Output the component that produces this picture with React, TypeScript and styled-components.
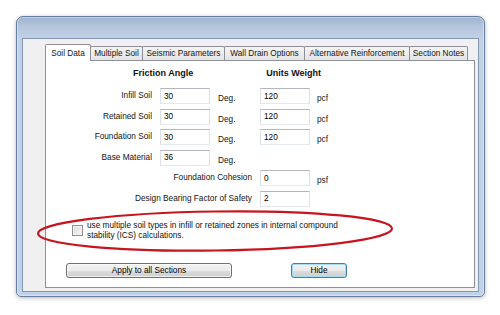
import { Fragment } from "react";
import { createGlobalStyle, styled } from "styled-components";

const GlobalStyle = createGlobalStyle`
  html, body {
    margin: 0;
    background: #fff;
  }
  body {
    font-family: "Liberation Sans", Arial, sans-serif;
    font-size: 8.25px;
    color: #141414;
  }
`;

const tabs = [
  { label: "Soil Data", w: 46 },
  { label: "Multiple Soil", w: 53 },
  { label: "Seismic Parameters", w: 83 },
  { label: "Wall Drain Options", w: 81 },
  { label: "Alternative Reinforcement", w: 106 },
  { label: "Section Notes", w: 59 },
];

const soilRows = [
  { label: "Infill Soil", angle: "30", weight: "120" },
  { label: "Retained Soil", angle: "30", weight: "120" },
  { label: "Foundation Soil", angle: "30", weight: "120" },
  { label: "Base Material", angle: "36" },
];

export default function App() {
  return (
    <Stage>
      <GlobalStyle />
      <Window>
        <TitleBar />
        <Client>
          <TabStrip>
            {tabs.map((t, i) => (
              <Tab key={t.label} $w={t.w} $active={i === 0}>
                {t.label}
              </Tab>
            ))}
          </TabStrip>
          <Panel>
            <HeadRow>
              <Heading>Friction Angle</Heading>
              <Heading>Units Weight</Heading>
            </HeadRow>
            <FormGrid>
              {soilRows.map((r) => (
                <Fragment key={r.label}>
                  <Label>{r.label}</Label>
                  <Field readOnly defaultValue={r.angle} />
                  <Unit>Deg.</Unit>
                  {r.weight ? (
                    <>
                      <Field readOnly defaultValue={r.weight} />
                      <Unit $right>pcf</Unit>
                    </>
                  ) : (
                    <>
                      <span />
                      <span />
                    </>
                  )}
                </Fragment>
              ))}
              <Label $wide>Foundation Cohesion</Label>
              <Field readOnly defaultValue="0" />
              <Unit $right>psf</Unit>
              <Label $wide>Design Bearing Factor of Safety</Label>
              <Field readOnly defaultValue="2" />
              <span />
            </FormGrid>
            <CheckRow>
              <CheckBox />
              <CheckText>
                use multiple soil types in infill or retained zones in internal compound
                <br />
                stability (ICS) calculations.
              </CheckText>
            </CheckRow>
            <ButtonRow>
              <Button $w={166}>Apply to all Sections</Button>
              <Button $w={56} $default>
                Hide
              </Button>
            </ButtonRow>
          </Panel>
          <Marker viewBox="0 0 452 250" width="452" height="250">
            <ellipse
              cx="192"
              cy="192"
              rx="177"
              ry="19.5"
              transform="rotate(-0.8 192 192)"
              fill="none"
              stroke="#c8141e"
              strokeWidth="2.2"
            />
          </Marker>
        </Client>
      </Window>
    </Stage>
  );
}

const Stage = styled.div`
  width: 500px;
  height: 315px;
  box-sizing: border-box;
  padding: 16px 0 0 16px;
  overflow: hidden;
`;

const Window = styled.div`
  width: 469px;
  height: 281px;
  box-sizing: border-box;
  display: flex;
  flex-direction: column;
  padding: 0 5px 4px 5px;
  border: 1px solid #657d9e;
  border-radius: 7px 7px 5px 5px;
  background: linear-gradient(
    180deg,
    #9fb3cf 0px,
    #b3c4db 9px,
    #c2d1e6 22px,
    #c1d2e8 100%
  );
  box-shadow: 0 1px 4px rgba(0, 0, 0, 0.28),
    inset 0 0 0 1px rgba(255, 255, 255, 0.4);
`;

const TitleBar = styled.div`
  flex: none;
  height: 21px;
`;

const Client = styled.div`
  flex: 1;
  position: relative;
  display: flex;
  flex-direction: column;
  box-sizing: border-box;
  padding: 5px 3px 3px 22px;
  background: #f0f0f0;
  border: 1px solid #8397b3;
`;

const TabStrip = styled.div`
  display: flex;
  align-items: flex-end;
  height: 17px;
  margin-bottom: -1px;
  position: relative;
  z-index: 1;
`;

const Tab = styled.div<{ $w: number; $active?: boolean }>`
  flex: none;
  width: ${(p) => p.$w}px;
  height: ${(p) => (p.$active ? 17 : 14)}px;
  margin-bottom: ${(p) => (p.$active ? 0 : 1)}px;
  box-sizing: border-box;
  display: flex;
  align-items: center;
  justify-content: center;
  white-space: nowrap;
  border: 1px solid #8e9099;
  border-bottom: none;
  border-radius: 2px 2px 0 0;
  background: ${(p) =>
    p.$active ? "#fff" : "linear-gradient(180deg, #f4f4f4, #e4e4e4)"};
  & + & {
    margin-left: -1px;
  }
`;

const Panel = styled.div`
  flex: 1;
  display: flex;
  flex-direction: column;
  background: #fff;
  border: 1px solid #8e9099;
  padding-top: 6.5px;
`;

const HeadRow = styled.div`
  display: flex;
  gap: 73px;
  padding-left: 87px;
`;

const Heading = styled.div`
  font-size: 9px;
  font-weight: bold;
  line-height: 11px;
  color: #111;
`;

const FormGrid = styled.div`
  display: grid;
  grid-template-columns: 114px 50px 50px 50px auto;
  grid-auto-rows: 16px;
  row-gap: 4.6px;
  margin-top: 9.5px;
`;

const Label = styled.div<{ $wide?: boolean }>`
  grid-column: ${(p) => (p.$wide ? "1 / 4" : "auto")};
  align-self: center;
  text-align: right;
  padding-right: 8px;
  white-space: nowrap;
  line-height: 12px;
`;

const Field = styled.input`
  width: 50px;
  height: 16px;
  box-sizing: border-box;
  margin: 0;
  padding: 0 3px;
  font: inherit;
  font-size: 8.25px;
  color: #000;
  background: #fff;
  border: 1px solid;
  border-color: #b3b6bd #dde1e7 #e3e9ef #dbdfe6;
  outline: none;
`;

const Unit = styled.div<{ $right?: boolean }>`
  align-self: start;
  padding-top: 5px;
  padding-left: ${(p) => (p.$right ? 7 : 8)}px;
  line-height: 12px;
`;

const CheckRow = styled.div`
  display: flex;
  align-items: center;
  gap: 4px;
  margin-top: 14px;
  padding-left: 26px;
`;

const CheckBox = styled.span`
  flex: none;
  width: 11px;
  height: 11px;
  box-sizing: border-box;
  border: 1px solid #8e8f8f;
  background: linear-gradient(135deg, #d9d9d9, #f7f7f7);
  box-shadow: inset 0 0 0 1px #f2f2f2;
`;

const CheckText = styled.div`
  line-height: 10px;
  color: #111;
`;

const ButtonRow = styled.div`
  display: flex;
  gap: 59px;
  margin-top: 22px;
  padding-left: 20px;
`;

const Button = styled.div<{ $w: number; $default?: boolean }>`
  width: ${(p) => p.$w}px;
  height: 15px;
  box-sizing: border-box;
  display: flex;
  align-items: center;
  justify-content: center;
  color: #000;
  border: 1px solid ${(p) => (p.$default ? "#3c7fb1" : "#707070")};
  border-radius: 3px;
  background: linear-gradient(
    180deg,
    #f2f2f2 0%,
    #ebebeb 50%,
    #dddddd 50%,
    #cfcfcf 100%
  );
  box-shadow: inset 0 0 0 1px
    ${(p) => (p.$default ? "#a9dcf2" : "rgba(255, 255, 255, 0.7)")};
`;

const Marker = styled.svg`
  position: absolute;
  left: 0;
  top: 0;
  pointer-events: none;
  overflow: visible;
`;
